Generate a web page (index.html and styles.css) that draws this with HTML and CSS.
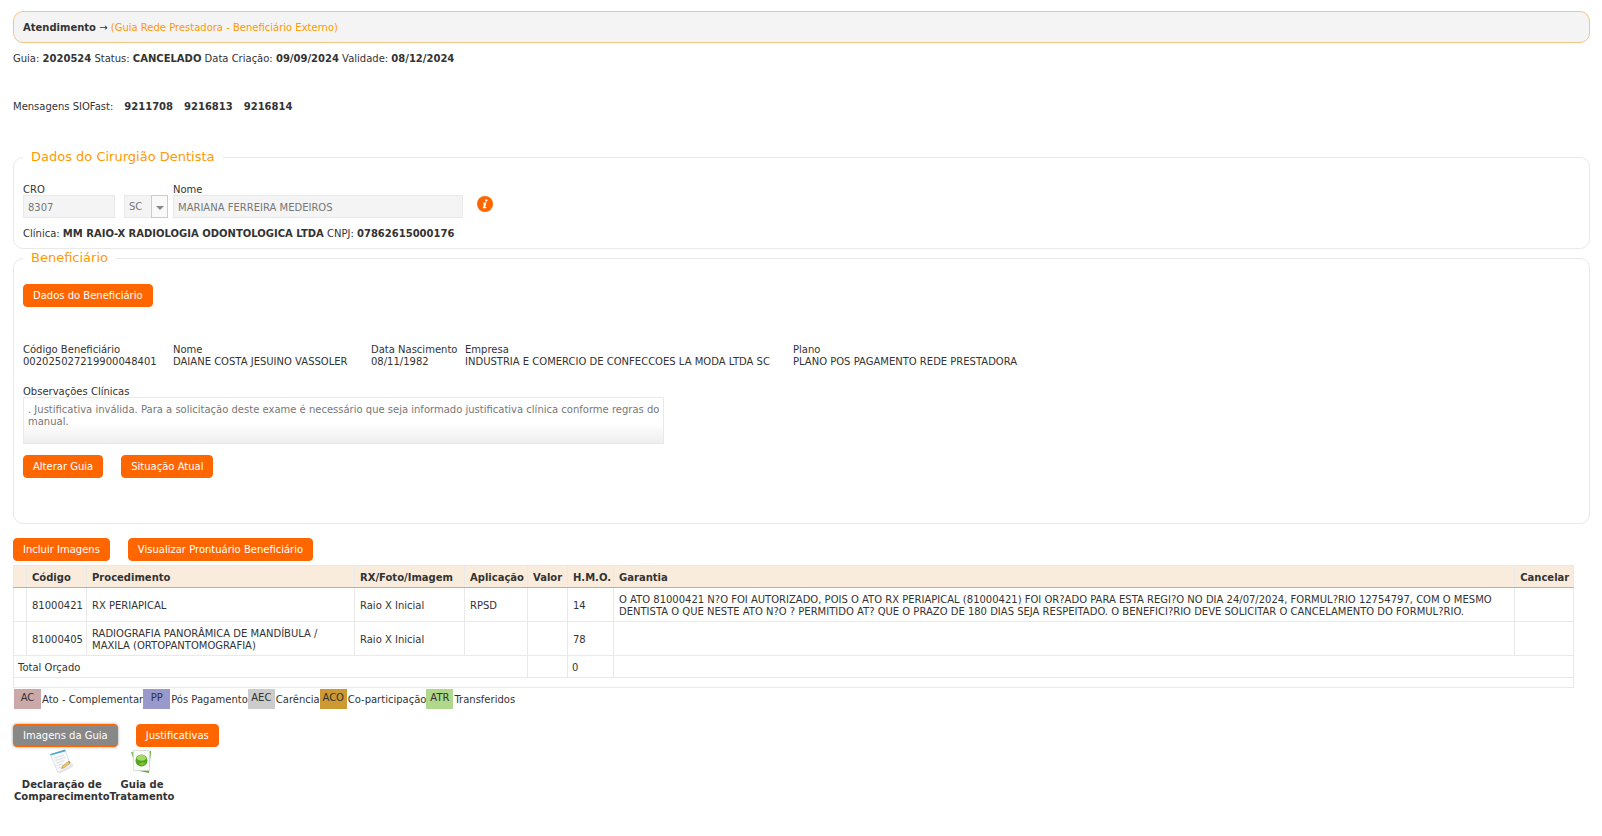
FILE: index.html
```
<!DOCTYPE html>
<html lang="pt-BR">
<head>
    <meta charset="UTF-8">
    <meta name="viewport" content="width=device-width, initial-scale=1.0">
    <title>Atendimento</title>
    <link rel="stylesheet" href="styles.css">
</head>
<body>
    <h1 class="titulo">
        <strong>Atendimento</strong> → <span class="subtitulo">(Guia Rede Prestadora - Beneficiário Externo)</span>
    </h1>

    <p class="resumo">Guia: <b>2020524</b> Status: <b>CANCELADO</b> Data Criação: <b>09/09/2024</b> Validade: <b>08/12/2024</b></p>

    <div class="mensagens">
        <span>Mensagens SIOFast:</span>
        <a href="#">9211708</a>
        <a href="#">9216813</a>
        <a href="#">9216814</a>
    </div>

    <fieldset class="quadro quadro-dentista">
        <legend>Dados do Cirurgião Dentista</legend>
        <div class="linha">
            <div class="campo campo-cro">
                <label for="cro">CRO</label>
                <input type="text" id="cro" value="8307" disabled>
            </div>
            <div class="campo campo-uf">
                <select id="uf" aria-label="UF" disabled>
                    <option>SC</option>
                </select>
                <span class="seta"></span>
            </div>
            <div class="campo campo-nome">
                <label for="nome">Nome</label>
                <input type="text" id="nome" value="MARIANA FERREIRA MEDEIROS" disabled>
            </div>
            <button type="button" class="info" aria-label="Informações">
                <svg width="16" height="16" viewBox="0 0 16 16">
                    <circle cx="8" cy="8" r="8" fill="#f60"/>
                    <circle cx="9.2" cy="4.4" r="1.2" fill="#fff"/>
                    <path d="M6.400 6.500h3.100L8.200 11h1.200l-.4 1.200H5.700L7 7.700H6z" fill="#fff"/>
                </svg>
            </button>
        </div>
        <p class="clinica">Clínica: <b>MM RAIO-X RADIOLOGIA ODONTOLOGICA LTDA</b> CNPJ: <b>07862615000176</b></p>
    </fieldset>

    <fieldset class="quadro quadro-beneficiario">
        <legend>Beneficiário</legend>
        <button type="button" class="botao">Dados do Beneficiário</button>

        <dl class="dados">
            <div><dt>Código Beneficiário</dt><dd>002025027219900048401</dd></div>
            <div><dt>Nome</dt><dd>DAIANE COSTA JESUINO VASSOLER</dd></div>
            <div><dt>Data Nascimento</dt><dd>08/11/1982</dd></div>
            <div><dt>Empresa</dt><dd>INDUSTRIA E COMERCIO DE CONFECCOES LA MODA LTDA SC</dd></div>
            <div><dt>Plano</dt><dd>PLANO POS PAGAMENTO REDE PRESTADORA</dd></div>
        </dl>

        <div class="campo campo-obs">
            <label for="obs">Observações Clínicas</label>
            <textarea id="obs" disabled>. Justificativa inválida. Para a solicitação deste exame é necessário que seja informado justificativa clínica conforme regras do manual.</textarea>
        </div>

        <div class="botoes">
            <button type="button" class="botao">Alterar Guia</button>
            <button type="button" class="botao">Situação Atual</button>
        </div>
    </fieldset>

    <div class="botoes botoes-imagens">
        <button type="button" class="botao">Incluir Imagens</button>
        <button type="button" class="botao">Visualizar Prontuário Beneficiário</button>
    </div>

    <table class="procedimentos">
        <colgroup>
            <col class="col-marca">
            <col class="col-codigo">
            <col class="col-procedimento">
            <col class="col-rx">
            <col class="col-aplicacao">
            <col class="col-valor">
            <col class="col-hmo">
            <col>
            <col class="col-cancelar">
        </colgroup>
        <thead>
            <tr>
                <th></th>
                <th>Código</th>
                <th>Procedimento</th>
                <th>RX/Foto/Imagem</th>
                <th>Aplicação</th>
                <th>Valor</th>
                <th>H.M.O.</th>
                <th>Garantia</th>
                <th>Cancelar</th>
            </tr>
        </thead>
        <tbody>
            <tr>
                <td></td>
                <td>81000421</td>
                <td>RX PERIAPICAL</td>
                <td>Raio X Inicial</td>
                <td>RPSD</td>
                <td></td>
                <td>14</td>
                <td>O ATO 81000421 N?O FOI AUTORIZADO, POIS O ATO RX PERIAPICAL (81000421) FOI OR?ADO PARA ESTA REGI?O NO DIA 24/07/2024, FORMUL?RIO 12754797, COM O MESMO DENTISTA O QUE NESTE ATO N?O ? PERMITIDO AT? QUE O PRAZO DE 180 DIAS SEJA RESPEITADO. O BENEFICI?RIO DEVE SOLICITAR O CANCELAMENTO DO FORMUL?RIO.</td>
                <td></td>
            </tr>
            <tr>
                <td></td>
                <td>81000405</td>
                <td>RADIOGRAFIA PANORÂMICA DE MANDÍBULA / MAXILA (ORTOPANTOMOGRAFIA)</td>
                <td>Raio X Inicial</td>
                <td></td>
                <td></td>
                <td>78</td>
                <td></td>
                <td></td>
            </tr>
            <tr class="total">
                <td colspan="5">Total Orçado</td>
                <td></td>
                <td>0</td>
                <td colspan="2"></td>
            </tr>
            <tr class="vazia">
                <td colspan="9"></td>
            </tr>
        </tbody>
    </table>

    <ul class="legenda">
        <li><span class="sigla ac">AC</span><span class="descricao">Ato - Complementar</span></li>
        <li><span class="sigla pp">PP</span><span class="descricao">Pós Pagamento</span></li>
        <li><span class="sigla aec">AEC</span><span class="descricao">Carência</span></li>
        <li><span class="sigla aco">ACO</span><span class="descricao">Co-participação</span></li>
        <li><span class="sigla atr">ATR</span><span class="descricao">Transferidos</span></li>
    </ul>

    <div class="botoes">
        <button type="button" class="botao ativo">Imagens da Guia</button>
        <button type="button" class="botao">Justificativas</button>
    </div>

    <div class="atalhos">
        <a href="#">
            <svg width="24" height="24" viewBox="0 0 24 24">
                <path d="M10 20l13-5-1 3-12 6z" fill="#eceef0" stroke="#d8dadd" stroke-width=".6"/>
                <path d="M.500 6L15 1l6 16L8 23.500z" fill="#f7f8f9" stroke="#d3d6d9" stroke-width=".7"/>
                <path d="M.500 6.500L.300 5 15 .500l.8 1.800z" fill="#4aa9cc"/>
                <path d="M4.500 9l9.500-3M5.500 11.500l9.500-3M6.500 14l8-2.500M7.500 16.500l5-1.700M8.500 19l3-1" stroke="#d3d6da" stroke-width=".8"/>
                <path d="M11.500 19.500l1.200-2.700 6-4.500 1.600 1.800-6 4.600z" fill="#ecc95c" stroke="#a08347" stroke-width=".5"/>
                <path d="M18 12.800l1-.8 1.600 1.800-1 .8z" fill="#c77"/>
            </svg>
            Declaração de<br>Comparecimento
        </a>
        <a href="#">
            <svg width="24" height="24" viewBox="0 0 24 24">
                <path d="M1 3l16-2-1 20-9 1z" fill="#8cc063"/>
                <path d="M9 3l12-1-2 22-14-3z" fill="#62a83b"/>
                <path d="M3.500 1.500h16v20h-16z" fill="#fbfbfb" stroke="#d3d8ce" stroke-width=".7"/>
                <circle cx="11.500" cy="11.500" r="6" fill="#55a51e"/>
                <path d="M6.500 9.500c2-5 8-5 10 0-3 3-7 3-10 0z" fill="#a5d96a"/>
                <path d="M9 15c2 2 5 1.500 6.500-1-2-1-4.500-.8-6.500 1z" fill="#80c83a"/>
            </svg>
            Guia de<br>Tratamento
        </a>
    </div>
</body>
</html>
```

FILE: styles.css
```
* {
    box-sizing: border-box;
}

body {
    font-family: Verdana, "DejaVu Sans", sans-serif;
    font-size: 10px;
    line-height: 12px;
    color: #333;
    background: #fff;
    margin: 0;
    padding: 11px 12px 20px 13px;
}

p, dl, dd, ul {
    margin: 0;
    padding: 0;
}

a {
    color: #333;
    font-weight: bold;
    text-decoration: none;
}

button, input, select, textarea {
    font-family: inherit;
    font-size: 10px;
    line-height: 12px;
    margin: 0;
}

/* cabeçalho */
.titulo {
    margin: 0;
    padding: 10px 9px 8px;
    font-size: 10px;
    line-height: 12px;
    font-weight: normal;
    background: #f4f4f4;
    border: 1px solid #f3c585;
    border-radius: 10px;
}

.subtitulo {
    color: #f90;
}

.resumo {
    margin-top: 10px;
}

.mensagens {
    display: flex;
    gap: 11px;
    margin: 36px 0;
}

/* quadros */
.quadro {
    margin: 0;
    padding: 0 9px;
    border: 1px solid #e9e9e9;
    border-radius: 10px;
}

.quadro legend {
    padding: 0 8px;
    font-size: 13px;
    line-height: 16px;
    color: #f90;
}

.quadro-dentista {
    padding-bottom: 8px;
}

.quadro-beneficiario {
    margin-top: 1px;
    padding-bottom: 45px;
}

.linha {
    display: flex;
    align-items: flex-end;
    padding-top: 19px;
}

.campo {
    display: flex;
    flex-direction: column;
}

.campo label {
    height: 11px;
}

.campo input,
.campo select,
.campo textarea {
    width: 100%;
    height: 23px;
    padding: 1px 4px 0;
    color: #777;
    background: #f4f4f4;
    border: 1px solid #e9e9e9;
    border-radius: 0;
    opacity: 1;
}

.campo-cro {
    width: 92px;
    margin-right: 9px;
}

.campo-uf {
    position: relative;
    width: 44px;
    margin-right: 5px;
}

.campo-uf select {
    appearance: none;
}

.seta {
    position: absolute;
    top: 0;
    right: 0;
    width: 17px;
    height: 23px;
    border: 1px solid #ccc;
    background: #f9f9f9;
    pointer-events: none;
}

.seta::after {
    content: "";
    position: absolute;
    top: 10px;
    left: 4px;
    border: 4px solid transparent;
    border-top-color: #888;
    border-bottom: 0;
}

.campo-nome {
    width: 290px;
}

.info {
    margin: 0 0 6px 14px;
    padding: 0;
    border: 0;
    background: none;
    line-height: 0;
    cursor: pointer;
}

.clinica {
    margin-top: 10px;
}

/* botões */
.botao {
    height: 23px;
    padding: 1px 9px 0;
    color: #fff;
    background: #f60;
    border: 1px solid #f60;
    border-radius: 4px;
    cursor: pointer;
}

.botao.ativo {
    background: #888;
    box-shadow: 0 0 3px #999;
}

.botoes {
    display: flex;
    gap: 18px;
}

.quadro-beneficiario > .botao {
    margin-top: 18px;
}

.dados {
    display: grid;
    grid-template-columns: 150px 198px 94px 328px auto;
    justify-content: start;
    margin: 37px 0 18px;
}

.campo-obs {
    width: 641px;
    max-width: 100%;
}

.campo-obs textarea {
    height: 47px;
    padding: 6px 0 6px 4px;
    resize: none;
    background: linear-gradient(#fff 55%, #eee);
}

.quadro-beneficiario .botoes {
    margin-top: 11px;
}

.botoes-imagens {
    margin: 14px 0 4px;
}

/* procedimentos */
.procedimentos {
    width: 99%;
    table-layout: fixed;
    border-collapse: collapse;
}

.procedimentos th,
.procedimentos td {
    padding: 5px 5px 3px;
    text-align: left;
    border: 1px solid #e9e9e9;
}

.procedimentos th {
    padding: 6px 0 3px 5px;
    background: #faecdc;
    border-bottom-color: #f96;
}

.procedimentos tbody td {
    height: 34px;
}

.procedimentos .total td {
    height: 22px;
    padding-left: 4px;
}

.procedimentos .vazia td {
    height: 10px;
    padding: 0;
}

.col-marca { width: 13px; }
.col-codigo { width: 60px; }
.col-procedimento { width: 268px; }
.col-rx { width: 110px; }
.col-aplicacao { width: 63px; }
.col-valor { width: 40px; }
.col-hmo { width: 46px; }
.col-cancelar { width: 59px; }

/* legenda das siglas */
.legenda {
    display: flex;
    margin: 1px 0 15px 1px;
    list-style: none;
}

.legenda li {
    display: flex;
    align-items: center;
    gap: 1px;
}

.sigla {
    width: 27px;
    height: 20px;
    line-height: 18px;
    text-align: center;
}

.descricao {
    padding-top: 2px;
}

.ac { background: #cca9a9; }
.pp { background: #99c; }
.aec { background: #ccc; }
.aco { background: #c93; }
.atr { background: #afd88a; }

/* atalhos de impressão */
.atalhos {
    display: flex;
    margin: 2px 0 0 1px;
    text-align: center;
}

.atalhos a {
    display: block;
}

.atalhos svg {
    display: block;
    margin: 0 auto 6px;
}
```
